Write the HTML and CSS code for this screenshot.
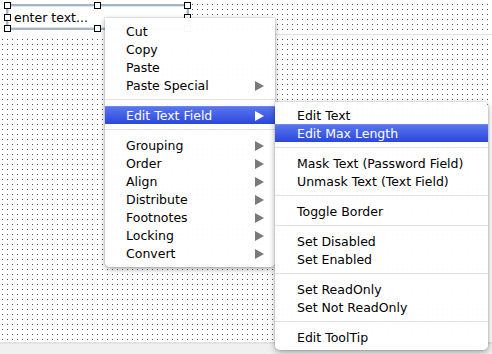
FILE: index.html
```html
<!DOCTYPE html>
<html>
<head>
<meta charset="utf-8">
<link rel="stylesheet" href="styles.css">
</head>
<body>
<div class="page">
  <div class="canvas">
    <div class="band"></div>
  </div>
  <div class="footer"></div>

  <div class="field-area">
    <div class="field">enter text...</div>
    <span class="h h-tl"></span><span class="h h-tm"></span><span class="h h-tr"></span>
    <span class="h h-ml"></span><span class="h h-mr"></span>
    <span class="h h-bl"></span><span class="h h-bm"></span><span class="h h-br"></span>
  </div>

  <div class="menu main">
    <div class="item">Cut</div>
    <div class="item">Copy</div>
    <div class="item">Paste</div>
    <div class="item sub">Paste Special</div>
    <div class="sep"></div>
    <div class="item sub active">Edit Text Field</div>
    <div class="sep"></div>
    <div class="item sub">Grouping</div>
    <div class="item sub">Order</div>
    <div class="item sub">Align</div>
    <div class="item sub">Distribute</div>
    <div class="item sub">Footnotes</div>
    <div class="item sub">Locking</div>
    <div class="item sub">Convert</div>
  </div>

  <div class="menu submenu">
    <div class="item">Edit Text</div>
    <div class="item active">Edit Max Length</div>
    <div class="sep"></div>
    <div class="item">Mask Text (Password Field)</div>
    <div class="item">Unmask Text (Text Field)</div>
    <div class="sep"></div>
    <div class="item">Toggle Border</div>
    <div class="sep"></div>
    <div class="item">Set Disabled</div>
    <div class="item">Set Enabled</div>
    <div class="sep"></div>
    <div class="item">Set ReadOnly</div>
    <div class="item">Set Not ReadOnly</div>
    <div class="sep"></div>
    <div class="item">Edit ToolTip</div>
  </div>
</div>
</body>
</html>
```

FILE: styles.css
```css
* { box-sizing: border-box; }
html, body { margin: 0; padding: 0; background: #fff; }
body { font-family: "DejaVu Sans", "Liberation Sans", sans-serif; }

.page {
  position: relative;
  width: 492px;
  height: 354px;
  overflow: hidden;
  display: flex;
  flex-direction: column;
}

.canvas {
  height: 342px;
  background:
    linear-gradient(to right, #fff 4px, transparent 4px) -2px 0 / 5px 5px,
    linear-gradient(to bottom, #fff 4px, transparent 4px) -2px 0 / 5px 5px,
    #505050;
}
.band {
  height: 35px;
  border-bottom: 1px solid #e4e4e4;
}
.footer {
  flex: 1;
  border-top: 2px solid #e2e2e2;
  background: #f0f0f0;
}

.field-area {
  position: absolute;
  left: 0;
  top: 0;
  width: 192px;
  height: 36px;
  background: #fff;
}
.field {
  position: absolute;
  left: 6px;
  top: 4px;
  width: 183px;
  height: 26px;
  border: 2px solid #a3b6ca;
  box-shadow: inset 0 0 0 1px #dce5ee;
  padding: 4px 0 0 6px;
  font-size: 12.5px;
  color: #000;
  white-space: nowrap;
}
.h {
  position: absolute;
  width: 7px;
  height: 7px;
  background: #fff;
  border: 1px solid #000;
}
.h-tl { left: 4px; top: 2px; }
.h-tm { left: 94px; top: 2px; }
.h-tr { left: 184px; top: 2px; }
.h-ml { left: 4px; top: 14px; }
.h-mr { left: 184px; top: 14px; }
.h-bl { left: 4px; top: 25px; }
.h-bm { left: 94px; top: 25px; }
.h-br { left: 184px; top: 25px; }

.menu {
  position: absolute;
  background: rgba(255,255,255,0.97);
  border-radius: 0 0 5px 5px;
  box-shadow: 0 2px 6px rgba(0,0,0,0.35), 0 0 0 1px rgba(0,0,0,0.06);
  font-size: 12.5px;
  color: #000;
}
.main {
  left: 105px;
  top: 18px;
  width: 170px;
  padding: 4px 0 5px;
}
.submenu {
  left: 275px;
  top: 102px;
  width: 213px;
  padding: 4px 0 4px;
  border-radius: 0 5px 5px 5px;
}
.item {
  height: 18px;
  line-height: 18px;
  padding-top: 1px;
  padding-left: 21px;
  display: flex;
  align-items: center;
  justify-content: space-between;
  padding-right: 11px;
  white-space: nowrap;
}
.submenu .item { padding-left: 22px; }
.item.sub::after {
  content: "";
  width: 0;
  height: 0;
  border-left: 9px solid #7a7a7a;
  border-top: 5px solid transparent;
  border-bottom: 5px solid transparent;
}
.item.active {
  color: #fff;
  background: linear-gradient(#5b78ee, #2b47dc);
  box-shadow: inset 0 1px 0 #6f88f0;
}
.item.active.sub::after { border-left-color: #fff; }
.sep {
  height: 1px;
  margin: 5px 0 6px;
  background: #e2e2e2;
}
```
